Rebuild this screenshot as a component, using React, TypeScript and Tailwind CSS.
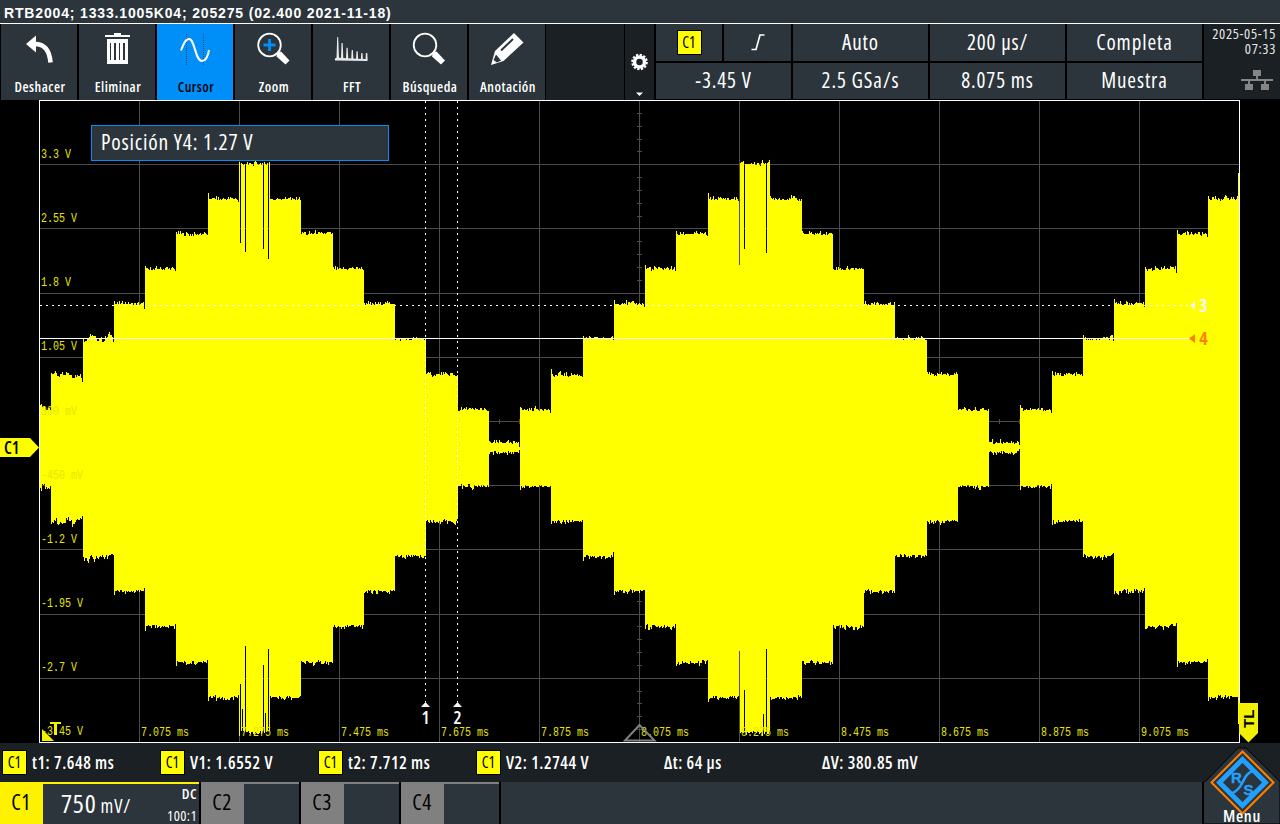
import type { ReactNode } from "react";

const UI = "[font-family:'Open_Sans','Noto_Sans',sans-serif] [font-stretch:75%]";

/* ---------- waveform ---------- */

const TOPS = [410, 375, 339, 304, 269, 234, 199, 164];
const BOTTOMS = [486, 521, 556, 591, 626, 662, 697, 732];
const IDLE = -1;
const FIRST_EDGE = 50.8;
const STEP = 31.26;

function levelAt(x: number) {
  if (x < 51) return 0;
  const n = (Math.floor((x - FIRST_EDGE) / STEP) + 1) % 16;
  if (n <= 7) return n;
  if (n < 15) return 14 - n;
  return IDLE;
}

function noise(seed: number) {
  const v = Math.sin(seed * 12.9898) * 43758.5453;
  return v - Math.floor(v);
}

function ripple(x: number, seed: number) {
  const a = noise(x + seed);
  const fine = a > 0.94 ? 4 : a > 0.82 ? 3 : a > 0.55 ? 2 : a > 0.2 ? 1 : 0;
  const wide = noise(Math.floor(x / 3) + seed);
  if (x >= 113) return fine - 1 + (wide > 0.85 ? 1 : wide < 0.15 ? -1 : 0);
  return fine + Math.round(wide * 7) - 4;
}

const SLITS_TOP: Record<number, number> = { 240: 243, 245: 252, 263: 249, 268: 259, 739: 265, 744: 249, 766: 253 };
const SLITS_BOTTOM: Record<number, number> = {
  240: 684, 242: 709, 245: 646, 263: 665, 265: 713, 268: 649, 739: 651, 744: 690, 763: 714, 766: 649,
};

function buildWave() {
  let d = "";
  for (let x = 40; x < 1239; x++) {
    const l = levelAt(x);
    let top = (l === IDLE ? 443 : TOPS[l]) - ripple(x, 0);
    let bottom = (l === IDLE ? 452 : BOTTOMS[l]) + ripple(x, 5000);
    const prev = levelAt(x - 1);
    const next = levelAt(x + 1);
    if (prev !== l && l > prev) {
      top -= 3;
      bottom += 3;
    }
    if (next !== l && next > l) {
      top += 3;
      bottom -= 3;
    }
    if (x === 1238) {
      top = 173;
      bottom = 724;
    }
    if (SLITS_TOP[x]) top = SLITS_TOP[x];
    if (SLITS_BOTTOM[x]) bottom = SLITS_BOTTOM[x];
    d += `M${x} ${top}h1V${bottom}h-1z`;
  }
  return d;
}

const WAVE = buildWave();
const H_LINES = [164, 228, 293, 357, 421, 485, 549, 614, 678];
const V_LINES = Array.from({ length: 11 }, (_, i) => 139 + i * 100);
const Y_LABELS: [string, number][] = [
  ["3.3 V", 158], ["2.55 V", 222], ["1.8 V", 286], ["1.05 V", 350], ["300 mV", 415],
  ["-450 mV", 479], ["-1.2 V", 543], ["-1.95 V", 607], ["-2.7 V", 671], ["-3.45 V", 735],
];
const X_LABELS = ["7.075", "7.275", "7.475", "7.675", "7.875", "8.075", "8.275", "8.475", "8.675", "8.875", "9.075"];

function AxisLabel({ x, y, children }: { x: number; y: number; children: string }) {
  return (
    <text
      x={x}
      y={y}
      textLength={children.length * 6}
      lengthAdjust="spacingAndGlyphs"
      className="fill-[#e6e600] text-[12.5px] [font-family:'Liberation_Mono',monospace]"
    >
      {children}
    </text>
  );
}

function Plot() {
  return (
    <svg viewBox="0 100 1280 643" className="block h-[643px] w-[1280px] bg-black">
      <g shapeRendering="crispEdges">
        <g fill="#4c4c4c">
          {H_LINES.map((y) => <rect key={y} x="40" y={y} width="1199" height="1" />)}
          {V_LINES.map((x) => <rect key={x} x={x} y="101" width="1" height="641" />)}
          {Array.from({ length: 49 }, (_, i) => (
            <rect key={i} x="637" y={Math.round(421 + (i - 24) * 12.84)} width="5" height="1" />
          ))}
          {Array.from({ length: 59 }, (_, i) => (
            <rect key={i} x={59 + i * 20} y="419" width="1" height="5" />
          ))}
        </g>
        <path d={WAVE} fill="#ffff00" />
        <rect x="39" y="742" width="1201" height="1" fill="#fff" />
        <rect x="39" y="100" width="1" height="643" fill="#fff" />
        <rect x="39" y="100" width="1201" height="1" fill="#fff" />
        <rect x="1239" y="100" width="1" height="643" fill="#fff" />
      </g>
      <path d="M42 729v12h12z" fill="#f2f200" />
      {Y_LABELS.map(([t, y]) => <AxisLabel key={t} x={41} y={y}>{t}</AxisLabel>)}
      {X_LABELS.map((t, i) => <AxisLabel key={t} x={141 + i * 100} y={736}>{`${t} ms`}</AxisLabel>)}
      <path d="M50 722h11v2h-4v11h-3v-11h-4z" fill="#f2f200" />
      <g stroke="#fff" shapeRendering="crispEdges">
        <path d="M425.5 101V702M457.5 101V702" strokeDasharray="2 4" />
        <path d="M40 305.5H1190" strokeDasharray="2 4" />
        <path d="M40 338.5H1190" />
      </g>
      <path d="M425.5 702l4.500 5h-9zM457.500 702l4.500 5h-9zM1190 305.500l5-4.500v9z" fill="#f4f4f4" />
      <path d="M1189 338.500l6-4.500v9z" fill="#ff8000" />
      <g className={`${UI} text-[18px] font-semibold`}>
        <text x="425.5" y="723.5" textAnchor="middle" fill="#fff">1</text>
        <text x="457.5" y="723.5" textAnchor="middle" fill="#fff">2</text>
        <text x="1203.5" y="312" textAnchor="middle" fill="#f4f4f4" className="font-bold">3</text>
        <text x="1203.5" y="345" textAnchor="middle" fill="#ff8000" className="font-bold">4</text>
      </g>
      <path d="M625 740.500h29.500L639.500 725z" fill="none" stroke="#808080" strokeWidth="2" />
      <path d="M0 438h30l9 9.500-9 9.500H0z" fill="#ffff00" />
      <text x="4" y="453.500" className="text-[17px] font-semibold">C1</text>
      <path d="M1239 703h19v30l-9.500 9.500-9.500-9.500z" fill="#f2f200" />
      <text transform="translate(1254 728) rotate(-90)" className="text-[15px] font-bold [font-family:'Liberation_Sans',sans-serif]">TL</text>
    </svg>
  );
}

/* ---------- toolbar icons, drawn in a 76 x 52 area ---------- */

const icons: Record<string, ReactNode> = {
  undo: (
    <>
      <path d="M25 20l10-8.500v17z" fill="#fff" />
      <path d="M34 20c9 0 14.500 6 15.500 18.500" fill="none" stroke="#fff" strokeWidth="4.600" />
    </>
  ),
  trash: (
    <g shapeRendering="crispEdges" fill="#fff">
      <path d="M26 11h25v2H26zM35 9h7v2h-7z" />
      <path fillRule="evenodd" d="M28 15h21v25H28zM31 19v17h1V19zM35 19v17h2V19zM40 19v17h1V19zM44 19v17h2V19z" />
    </g>
  ),
  cursor: (
    <>
      <path d="M29.500 10v31M46.500 10v31" stroke="#3a4a58" strokeDasharray="1 1" shapeRendering="crispEdges" />
      <path d="M24 26.500c2-5 4-11.500 8-11.500 6 0 6 22 13 22 4 0 6-5 7-11" fill="none" stroke="#fff" strokeWidth="2" />
    </>
  ),
  zoom: (
    <>
      <circle cx="34.500" cy="21" r="11.300" fill="none" stroke="#fff" strokeWidth="1.800" />
      <path d="M42.500 28.500l3.500-1 8.500 9-4 4-9-8z" fill="#fff" />
      <path d="M34.500 15v12M28.500 21h12" stroke="#008ff8" strokeWidth="2.800" />
    </>
  ),
  fft: (
    <path
      d="M22 36.500v-2l1.500-1L24.200 13h1L26 33.500l2 .5.500-15h1.200l.6 15 2.700.3.500-10.500h1.200l.5 10.500 3 .2.500-8.500h1.200l.5 8.500 2.600.2.500-7.500h1.200l.4 7.500 2.700.2.500-6h1.200l.4 6 2.600.1.400-6h1.400l.3 6.500v1.500z"
      fill="#e8e8e8"
    />
  ),
  search: (
    <>
      <circle cx="34" cy="21" r="11.300" fill="none" stroke="#fff" strokeWidth="1.800" />
      <path d="M42 28.500l3.500-1 8.500 9-4 4-9-8z" fill="#fff" />
    </>
  ),
  pencil: (
    <>
      <path fillRule="evenodd" d="M22 41l4-14L45 9l9.500 9.500-20 18.500zM24.500 36l3.500 2.500 4-2-5-6z" fill="#fff" />
      <path d="M32 26.500L44 15" stroke="#2b353b" strokeWidth="2" />
    </>
  ),
};

const TOOLS = [
  { icon: "undo", label: "Deshacer" },
  { icon: "trash", label: "Eliminar" },
  { icon: "cursor", label: "Cursor", active: true },
  { icon: "zoom", label: "Zoom" },
  { icon: "fft", label: "FFT" },
  { icon: "search", label: "Búsqueda" },
  { icon: "pencil", label: "Anotación" },
];

function ToolButton({ icon, label, active }: { icon: string; label: string; active?: boolean }) {
  return (
    <button className={`flex h-[76px] w-[76px] flex-col items-center ${active ? "bg-[#008ff8] text-black" : "bg-[#2b353b] text-white"}`}>
      <svg viewBox="0 0 76 52" className="h-[52px] w-[76px] shrink-0">{icons[icon]}</svg>
      <span className="pl-[2px] text-[14px] leading-[21px] font-semibold tracking-[0.5px] whitespace-nowrap">{label}</span>
    </button>
  );
}

function Badge() {
  return (
    <span className="flex size-[25px] items-center justify-center border border-black bg-[#ffff00] text-[15.5px] leading-none font-normal tracking-normal text-black">
      C1
    </span>
  );
}

function InfoCell({ children }: { children: ReactNode }) {
  return (
    <div className="flex flex-1 items-center justify-center bg-[#2b353b] pb-px text-[21px] leading-none font-medium tracking-[0.9px] text-white">{children}</div>
  );
}

function InfoColumn({ top, bottom }: { top: ReactNode; bottom: string }) {
  return (
    <div className="flex h-[75px] w-[135px] flex-col gap-[2px]">
      <div className="flex h-[37px] gap-[2px]">{top}</div>
      <div className="flex h-[36px]"><InfoCell>{bottom}</InfoCell></div>
    </div>
  );
}

function Toolbar() {
  return (
    <div className="flex h-[76px] bg-black">
      <div className="flex gap-[2px] pl-px">
        {TOOLS.map((t) => <ToolButton key={t.label} {...t} />)}
      </div>
      <div className="ml-px w-[78px] bg-[#1a2023]" />
      <div className="ml-px w-[29px] bg-[#1a2023]">
        <svg viewBox="625 24 29 76" className="h-[76px] w-[29px]">
          <circle cx="639.500" cy="62" r="5" fill="none" stroke="#fff" strokeWidth="3.500" />
          <circle cx="639.500" cy="62" r="7.300" fill="none" stroke="#fff" strokeWidth="2" strokeDasharray="2.300 1.520" />
          <path d="M636 92.500h7l-3.500 3.500z" fill="#fff" />
        </svg>
      </div>
      <div className="flex gap-[2px] pl-[2px]">
        <InfoColumn
          top={
            <>
              <div className="flex w-[66px] items-center justify-center bg-[#2b353b]"><Badge /></div>
              <InfoCell>
                <svg viewBox="0 0 14 18" className="h-[18px] w-[14px]">
                  <path d="M.5 16.500h4.500L9 2h4.500" fill="none" stroke="#fff" strokeWidth="1.700" />
                </svg>
              </InfoCell>
            </>
          }
          bottom="-3.45 V"
        />
        <InfoColumn top={<InfoCell>Auto</InfoCell>} bottom="2.5 GSa/s" />
        <InfoColumn top={<InfoCell>200 µs/</InfoCell>} bottom="8.075 ms" />
        <InfoColumn top={<InfoCell>Completa</InfoCell>} bottom="Muestra" />
      </div>
      <div className="ml-[2px] flex h-[75px] flex-1 flex-col items-end bg-[#1a2023] pt-[2px] pr-[4px] text-right text-[14.5px] leading-[15px] tracking-[0.65px] whitespace-nowrap text-[#e6e6e6]">
        <span>2025-05-15</span>
        <span>07:33</span>
        <svg viewBox="1241 70 32 20" className="mt-[14px] mr-[3px] h-[20px] w-[32px]" shapeRendering="crispEdges">
          <path d="M1253 70h8v6h-3v3h15v2h-7v3h3v6h-8v-6h3v-3h-14v3h3v6h-8v-6h3v-3h-7v-2h15v-3h-3z" fill="#858585" />
        </svg>
      </div>
    </div>
  );
}

const MEASUREMENTS = [
  { text: "t1: 7.648 ms", badge: true },
  { text: "V1: 1.6552 V", badge: true },
  { text: "t2: 7.712 ms", badge: true },
  { text: "V2: 1.2744 V", badge: true },
  { text: "Δt: 64 µs" },
  { text: "ΔV: 380.85 mV" },
];

function Channel({ name, children }: { name: string; children?: ReactNode }) {
  const on = Boolean(children);
  return (
    <div className={`mr-[2px] flex h-[42px] ${on ? "w-[199px]" : "w-[98px]"}`}>
      <div className={`flex w-[43px] shrink-0 items-center justify-center pr-px pb-[2px] text-[21.5px] leading-none font-medium tracking-[0.5px] text-black ${on ? "bg-[#fff200]" : "bg-[#808080]"}`}>
        {name}
      </div>
      <div className={`flex flex-1 border-t-2 bg-[#2b353b] ${on ? "border-[#fff200]" : "border-[#808080]"}`}>{children}</div>
    </div>
  );
}

function MenuLogo() {
  return (
    <svg viewBox="1203 746 77 78" className="absolute right-0 bottom-0 h-[78px] w-[77px]">
      <path d="M1203.500 824V781.500h2L1238 748h8l34 33.500V824z" fill="#2b353b" stroke="#000" />
      <path d="M1242.500 751.500l31 31-31 31-31-31z" fill="#2b353b" stroke="#ff8000" strokeWidth="2" />
      <path d="M1242.500 759.500l23 23-23 23-23-23z" fill="none" stroke="#22a0ff" strokeWidth="4.800" />
      <path d="M1254 770.500c-7 2-9 7-11.500 12s-5 9-12 11.500" fill="none" stroke="#22a0ff" strokeWidth="2.600" />
      <g stroke="#22a0ff" strokeWidth=".4" className="fill-[#22a0ff] text-[15px] font-bold tracking-normal [font-family:'Liberation_Sans',sans-serif]">
        <text x="1231" y="782.500">R</text>
        <text x="1243.500" y="795">S</text>
      </g>
      <text x="1242" y="821.500" textAnchor="middle" className="fill-white text-[16.5px] font-semibold tracking-[0.7px]">Menu</text>
    </svg>
  );
}

export default function App() {
  return (
    <main className={`relative flex h-[824px] w-[1280px] flex-col overflow-hidden bg-black ${UI}`}>
      <header className="flex h-[24px] shrink-0 items-center border-b border-white bg-[#2b353b] pt-[2px] pl-[4px] text-[14px] leading-none font-bold tracking-[0.84px] whitespace-nowrap text-white [font-family:'Liberation_Sans',sans-serif]">
        RTB2004; 1333.1005K04; 205275 (02.400 2021-11-18)
      </header>
      <Toolbar />
      <Plot />
      <div className="absolute top-[125px] left-[91px] flex h-[36px] w-[298px] items-center border border-[#008ff8] bg-[#2b353b] pb-[2px] pl-[9px] text-[21.5px] leading-none tracking-[0.8px] whitespace-nowrap text-white">
        Posición Y4: 1.27 V
      </div>
      <section className="flex h-[39px] items-center bg-[#1a2023] pl-[2px]">
        {MEASUREMENTS.map((m) => (
          <div key={m.text} className="flex w-[158px] items-center gap-[5px] text-[17px] leading-none font-semibold tracking-[0.58px] whitespace-nowrap text-white">
            {m.badge ? <Badge /> : <span className="w-[25px]" />}
            {m.text}
          </div>
        ))}
      </section>
      <footer className="flex h-[42px] bg-black">
        <Channel name="C1">
          <div className="flex flex-1 justify-between pr-[2px] pl-[18px] text-white">
            <div className="flex items-baseline gap-[4px] pt-[2px] leading-[34px] tracking-[0.8px] whitespace-nowrap">
              <span className="text-[26px]">750</span>
              <span className="text-[19px] font-medium">mV/</span>
            </div>
            <div className="flex flex-col items-end justify-between pt-[2px] text-[14.5px] leading-[16px] tracking-[0.4px]">
              <span className="font-semibold">DC</span>
              <span>100:1</span>
            </div>
          </div>
        </Channel>
        <Channel name="C2" />
        <Channel name="C3" />
        <Channel name="C4" />
        <div className="flex-1 bg-[#2b353b]" />
        <div className="ml-[2px] w-[76px] bg-[#2b353b]" />
      </footer>
      <MenuLogo />
    </main>
  );
}
